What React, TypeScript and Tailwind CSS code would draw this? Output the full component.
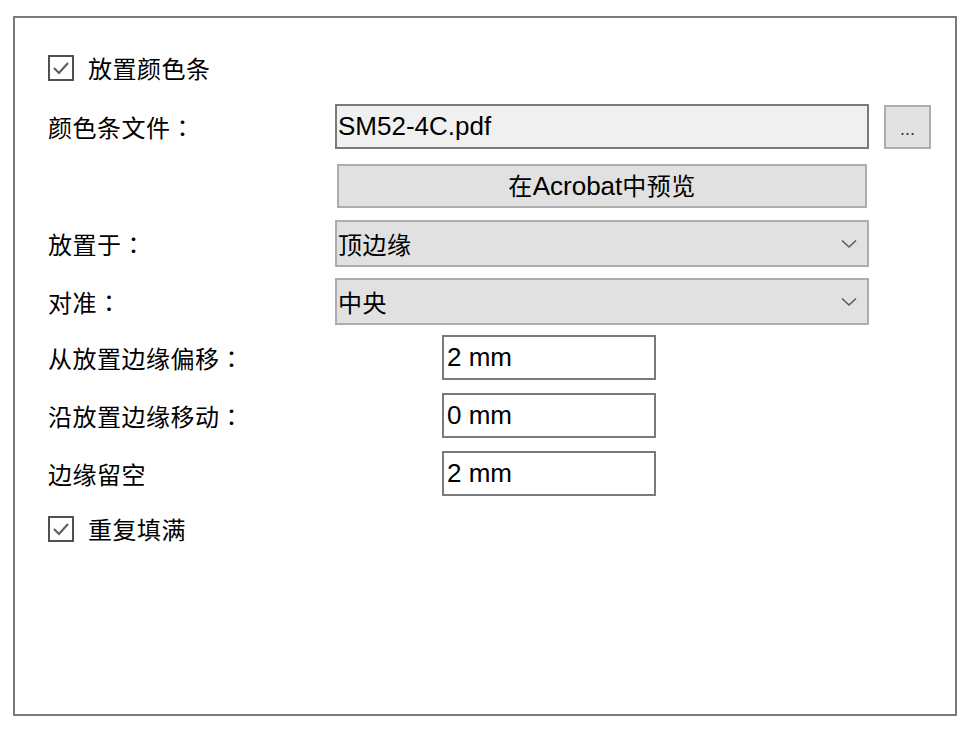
import React from 'react';

const cjk = "font-['Noto_Sans_CJK_SC',sans-serif]";
const latin = "font-['Liberation_Sans','Noto_Sans_CJK_SC',sans-serif]";

function CheckBox(): JSX.Element {
  return (
    <span className="w-[26px] h-[26px] border-2 border-[#505050] bg-white flex items-center justify-center shrink-0">
      <svg width="18" height="14" viewBox="0 0 18 14" fill="none">
        <path d="M2 7 L7 12 L16 2" stroke="#606060" strokeWidth="2.2" />
      </svg>
    </span>
  );
}

function Chevron(): JSX.Element {
  return (
    <svg width="16" height="10" viewBox="0 0 16 10" fill="none">
      <path d="M1 1.5 L8 8 L15 1.5" stroke="#5a5a5a" strokeWidth="1.6" />
    </svg>
  );
}

// CJK text; a trailing full-width colon is set with the JP face so it sits centred in its cell
function Cjk({ text }: { text: string }): JSX.Element {
  const colon = text.endsWith('：');
  const body = colon ? text.slice(0, -1) : text;
  return (
    <span className={`text-[24px] tracking-[0.5px] text-black ${cjk}`}>
      {body}
      {colon && <span className="font-['Noto_Sans_CJK_JP',sans-serif]">：</span>}
    </span>
  );
}

function Label({ text }: { text: string }): JSX.Element {
  return (
    <div className="w-[287px] shrink-0">
      <Cjk text={text} />
    </div>
  );
}

function Select({ value }: { value: string }): JSX.Element {
  return (
    <div className="w-[534px] h-[47px] border-2 border-[#adadad] bg-[#e1e1e1] flex items-center justify-between pl-[1px] pr-[10px]">
      <Cjk text={value} />
      <Chevron />
    </div>
  );
}

function NumberField({ value }: { value: string }): JSX.Element {
  return (
    <div className="ml-[107px] w-[214px] h-[45px] border-2 border-[#7a7a7a] bg-white flex items-center pl-[3px]">
      <span className={`text-[26px] text-black ${latin}`}>{value}</span>
    </div>
  );
}

export default function App(): JSX.Element {
  return (
    <div className="w-[970px] h-[730px] bg-white pt-[16px] pl-[13px]">
      <div className="w-[944px] h-[700px] border-2 border-[#7a7a7a] bg-white pl-[33px] pt-[35px] flex flex-col">
        {/* place colour bar */}
        <div className="h-[30px] flex items-center gap-[14px]">
          <CheckBox />
          <Cjk text="放置颜色条" />
        </div>

        {/* file */}
        <div className="mt-[21px] flex items-center">
          <Label text="颜色条文件：" />
          <div className="w-[534px] h-[45px] border-2 border-[#7a7a7a] bg-[#f0f0f0] flex items-center pl-[1px]">
            <span className={`text-[26px] text-black ${latin}`}>SM52-4C.pdf</span>
          </div>
          <button className="ml-[15px] w-[47px] h-[44px] border-2 border-[#adadad] bg-[#e1e1e1] flex items-end justify-center pb-[9px]">
            <span className={`text-[18px] leading-none text-[#333] ${latin}`}>...</span>
          </button>
        </div>

        {/* preview */}
        <div className="mt-[15px] flex">
          <div className="w-[289px] shrink-0" />
          <button className="w-[530px] h-[44px] border-2 border-[#adadad] bg-[#e1e1e1] flex items-center justify-center">
            <span className="text-black">
              <Cjk text="在" />
              <span className={`text-[26px] ${latin}`}>Acrobat</span>
              <Cjk text="中预览" />
            </span>
          </button>
        </div>

        <div className="mt-[12px] flex items-center">
          <Label text="放置于：" />
          <Select value="顶边缘" />
        </div>

        <div className="mt-[11px] flex items-center">
          <Label text="对准：" />
          <Select value="中央" />
        </div>

        <div className="mt-[10px] flex items-center">
          <Label text="从放置边缘偏移：" />
          <NumberField value="2 mm" />
        </div>

        <div className="mt-[13px] flex items-center">
          <Label text="沿放置边缘移动：" />
          <NumberField value="0 mm" />
        </div>

        <div className="mt-[13px] flex items-center">
          <Label text="边缘留空" />
          <NumberField value="2 mm" />
        </div>

        {/* repeat fill */}
        <div className="mt-[18px] h-[30px] flex items-center gap-[14px]">
          <CheckBox />
          <Cjk text="重复填满" />
        </div>
      </div>
    </div>
  );
}
